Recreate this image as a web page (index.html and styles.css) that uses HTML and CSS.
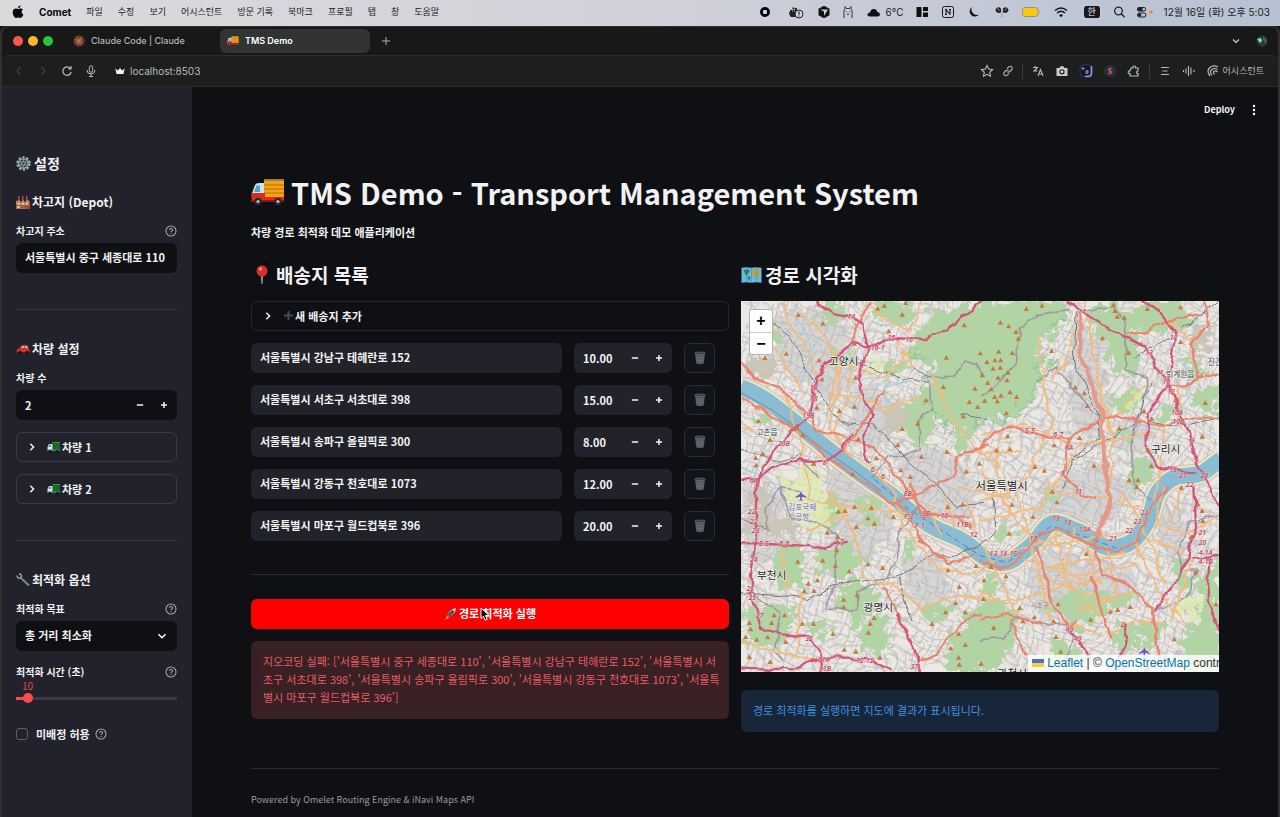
FILE: index.html
```html
<!DOCTYPE html>
<html lang="ko">
<head>
<meta charset="utf-8">
<title>TMS Demo</title>
<link rel="stylesheet" href="styles.css">
</head>
<body>
<svg class="sprite" aria-hidden="true">
  <symbol id="help" viewBox="0 0 12 12"><circle cx="6" cy="6" r="5" fill="none" stroke="currentColor" stroke-width="1.1"/><path d="M4.4 4.8C4.4 3 7.6 3 7.6 4.8 7.6 5.9 6 5.9 6 7.1M6 8.1v1" fill="none" stroke="currentColor" stroke-width="1.1"/></symbol>
  <symbol id="chev" viewBox="0 0 10 10"><path d="M3.3 1.8L6.6 5 3.3 8.2" fill="none" stroke="currentColor" stroke-width="1.5"/></symbol>
  <symbol id="minus" viewBox="0 0 10 10"><path d="M1.8 5h6.4" stroke="currentColor" stroke-width="1.5"/></symbol>
  <symbol id="plus" viewBox="0 0 10 10"><path d="M2 5h6M5 2v6" stroke="currentColor" stroke-width="1.5"/></symbol>
  <symbol id="trash" viewBox="0 0 14 14"><path d="M2 2h10L10.8 12.5Q7 14 3.200 12.500Z" fill="#54565c"/><ellipse cx="7" cy="2.300" rx="5.300" ry="1.300" fill="#3a3c42" stroke="#74767c" stroke-width=".6"/><path d="M4.500 4.500l.6 7.500M7 4.500V12.500M9.500 4.500L8.900 12M3 7h8M3.300 9.500h7.500" stroke="#7c7e84" stroke-width=".4"/></symbol>
  <symbol id="truck" viewBox="0 0 34 28"><path d="M13 1h20v20H13z" fill="#f5a313"/><path d="M13 1h20v2H13z" fill="#a8794a"/><path d="M13 7h20M13 11h20M13 15h20" stroke="#b06f13" stroke-width="1.200"/><path d="M1 15L4 7Q5 5 8 5h5v17H1z" fill="#cfe3e6"/><path d="M3 14L5.500 7.500H9V14z" fill="#4fa3c4"/><path d="M0 15h14v4h19v5H1z" fill="#d92c20"/><path d="M0 22h33v2H0z" fill="#8e1712"/><circle cx="7" cy="23.500" r="3.700" fill="#26282c"/><circle cx="7" cy="23.500" r="1.600" fill="#b9bcc0"/><circle cx="27" cy="23.500" r="3.700" fill="#26282c"/><circle cx="27" cy="23.500" r="1.600" fill="#b9bcc0"/></symbol>
  <symbol id="van" viewBox="0 0 14 12"><path d="M5.500 1H13v8.500H5.500z" fill="#136b1c"/><path d="M5.500 1H13v1H5.500z" fill="#5e7762"/><path d="M.5 6L2 3h3.500v6.500H.5z" fill="#dce6e8"/><path d="M1.300 6L2.500 3.700H4V6z" fill="#4b94ae"/><path d="M.5 8.500H13v1.300H.5z" fill="#6b7672"/><circle cx="3" cy="10.200" r="1.300" fill="#111"/><circle cx="10.500" cy="10.200" r="1.300" fill="#111"/></symbol>
</svg>

<header class="menubar">
  <nav class="menus">
    <svg width="12" height="14" viewBox="0 0 12 14"><path d="M8.500 .5C8.600 2 7.300 3.300 6 3.300 5.800 2 7.100.7 8.500.5zM6.200 4C7 4 7.700 3.400 8.800 3.400 9.700 3.400 10.500 3.900 11 4.600 9 5.800 9.400 8.700 11.400 9.500 10.800 11.200 9.700 12.900 8.600 12.900 7.800 12.900 7.300 12.400 6.300 12.400 5.300 12.400 4.800 12.900 4 12.900 2.300 12.900.7 9.800.7 7.300.7 4.900 2.200 3.500 3.900 3.500 4.900 3.500 5.600 4 6.200 4z" fill="#08080a"/></svg>
    <strong>Comet</strong><span>파일</span><span>수정</span><span>보기</span><span>어시스턴트</span><span>방문 기록</span><span>북마크</span><span>프로필</span><span>탭</span><span>창</span><span>도움말</span>
  </nav>
  <div class="status">
    <svg width="22" height="14" viewBox="0 0 22 14"><circle cx="11" cy="7" r="5" fill="#08080a"/><rect x="9" y="5" width="4" height="4" rx="1" fill="#d0d2dc"/></svg>
    <svg width="20" height="14" viewBox="0 0 20 14"><path d="M3 7h9v5H5Q3 10 3 7zM4 5h2v2H4zM6.500 5h2v2h-2zM9 3h2v4H9zM6.500 2.500h2v2h-2z" fill="#222"/><circle cx="13" cy="9" r="4" fill="#d0d2dc" stroke="#222"/><path d="M13 6.500v3M13 10.500v1" stroke="#222" stroke-width="1.200"/></svg>
    <svg width="16" height="14" viewBox="0 0 16 14"><path d="M8 .8l5.500 3v6.500L8 13.300l-5.500-3V3.800z" fill="#111"/><path d="M4 4.500h8L8 11V6.500z" fill="#c9ccd6"/></svg>
    <svg width="12" height="14" viewBox="0 0 12 14"><path d="M2 13V9Q1 6 3 4L3 1.500 4.500 3.500h3L9 1.500V4q2 2 1 5v4M4 6.500l1 1M8 6.500l-1 1M5 10q1-2 2 0" fill="none" stroke="#333" stroke-width="1"/></svg>
    <span class="weather"><svg width="17" height="12" viewBox="0 0 17 12"><path d="M6 10.500Q3 10 3.500 8 4 6.500 6 6.500 7 2.500 10 3 13 3.300 13.300 6 16 6.200 16 8.300 15.700 10.500 14 10.500z" fill="#111"/></svg>6°C</span>
    <svg width="16" height="14" viewBox="0 0 16 14"><path d="M2.500 2h5v10h-5zM9 2h5v4H9zM9 7.500h5V12H9z" fill="#111"/></svg>
    <svg width="16" height="14" viewBox="0 0 16 14"><rect x="2.500" y="1.500" width="11" height="11" rx="2" fill="none" stroke="#1a1a1a"/><path d="M5 4.500h2M6 4.500v5M5 9.500h2M6 4.500l4 5M10 9.500v-5M9 4.500h2" fill="none" stroke="#1a1a1a" stroke-width="1.100"/></svg>
    <svg width="16" height="14" viewBox="0 0 16 14"><path d="M6 2A5.200 5.200 0 1 0 13 9.500 5.500 5.500 0 0 1 6 2z" fill="#111"/></svg>
    <svg width="20" height="14" viewBox="0 0 20 14"><path d="M9 12V7.500Q4.500 9 3.500 5.500 4 2 7 2.200 9.500 3 9.200 5V12zM11 12V7.500q4.500 1.500 5.500-2Q16 2 13 2.200 10.500 3 10.800 5V12z" fill="#222"/><path d="M5.500 3.500l1.800 2M14.500 3.500l-1.800 2M10 3v8" stroke="#c4cad8" stroke-width=".9"/></svg>
    <svg width="18" height="14" viewBox="0 0 18 14"><rect x=".5" y="2.500" width="15.500" height="9" rx="2.500" fill="#fcc70c" stroke="#92949c"/><path d="M17 5.500q1.500 1.500 0 3z" fill="#92949c"/></svg>
    <svg width="22" height="14" viewBox="0 0 22 14"><path d="M5 5.500q6-5 12 0M7 8q4-3.500 8 0" fill="none" stroke="#111" stroke-width="1.500"/><path d="M9 10q2-1.500 4 0l-2 2.200z" fill="#111"/></svg>
    <span class="ime">한</span>
    <svg width="14" height="14" viewBox="0 0 14 14"><circle cx="6.500" cy="6" r="3.800" fill="none" stroke="#222" stroke-width="1.300"/><path d="M9.300 8.800l3.200 3.400" stroke="#222" stroke-width="1.500"/></svg>
    <svg width="18" height="14" viewBox="0 0 18 14"><rect x="1" y="2" width="9" height="4.500" rx="2.200" fill="#222"/><circle cx="7.800" cy="4.200" r="1.300" fill="#cfd2dc"/><rect x="1.500" y="8" width="8.500" height="4" rx="2" fill="none" stroke="#222"/><circle cx="3.500" cy="10" r="1.800" fill="#222"/><circle cx="15" cy="7" r="1.800" fill="#ff8a12"/></svg>
    <time>12월 16일 (화) 오후 5:03</time>
  </div>
</header>

<div class="window">
<div class="tabs">
  <div class="lights"><i class="red"></i><i class="yellow"></i><i class="green"></i></div>
  <a class="tab" href="#claude"><svg width="12" height="12" viewBox="0 0 13 13"><path d="M6.500.5v12M.5 6.500h12M2 2.300l9 8.400M2.300 11l8.400-9M4 .9l5 11.200M1 4.200l11 4.800M1 9l11-5M4.200 12L8.900 1" stroke="#c9694c" stroke-width="1"/></svg>Claude Code | Claude</a>
  <a class="tab active" href="#tms"><svg width="12" height="10"><use href="#truck"/></svg>TMS Demo</a>
  <button class="icon" aria-label="새 탭"><svg width="10" height="10" viewBox="0 0 10 10"><path d="M1 5h8M5 1v8" stroke="#b0b2b0"/></svg></button>
  <div class="tabs-end"><button class="icon" aria-label="탭 검색"><svg width="10" height="10" viewBox="0 0 10 10"><path d="M2 3.500l3 3 3-3" fill="none" stroke="#d0d0d0" stroke-width="1.200"/></svg></button><svg width="12" height="12" viewBox="0 0 12 12"><circle cx="6" cy="6" r="5.500" fill="#203c33"/><path d="M1 4l4-1 1 3-2 2z" fill="#9ad0bd"/><path d="M7 1l4 4-1 4-3-4z" fill="#4c5b4d"/></svg></div>
</div>
<div class="toolbar">
  <div class="nav">
    <button class="icon dim" aria-label="뒤로"><svg width="16" height="12" viewBox="0 0 16 12"><path d="M9.500 2L6 6l3.500 4" fill="none" stroke="currentColor"/></svg></button>
    <button class="icon dim" aria-label="앞으로"><svg width="16" height="12" viewBox="0 0 16 12"><path d="M6.500 2L10 6 6.500 10" fill="none" stroke="currentColor"/></svg></button>
    <button class="icon" aria-label="새로고침"><svg width="16" height="12" viewBox="0 0 16 12"><path d="M11.300 3.400A4.200 4.200 0 1 0 12.200 7M12 1v3H9" fill="none" stroke="currentColor" stroke-width="1.200"/></svg></button>
    <button class="icon" aria-label="음성"><svg width="16" height="12" viewBox="0 0 16 12"><rect x="6.300" y=".8" width="3.400" height="6.500" rx="1.700" fill="none" stroke="currentColor"/><path d="M4 5q0 4 4 4t4-4M8 9v2.500M6 11.500h4" fill="none" stroke="currentColor"/></svg></button>
  </div>
  <div class="address"><svg width="10" height="8" viewBox="0 0 10 8"><path d="M.3 1.500l2.500 2L5 1l2.200 2.500 2.500-2L8.500 7h-7z" fill="#f2f2f5"/></svg>localhost:8503</div>
  <div class="tools first">
    <svg class="i16" viewBox="0 0 16 16"><path d="M8 2.500l1.700 3.600 3.900.5-2.900 2.700.8 3.900L8 11.300l-3.500 1.900.8-3.900L2.400 6.600l3.900-.5z" fill="none" stroke="currentColor" stroke-width="1.100"/></svg>
    <svg class="i16" viewBox="0 0 16 16"><path d="M7 5.700l1.700-1.800q1.600-1.200 2.900 0t.2 2.800L10 8.500q-1.300 1-2.700.2M9 10.300l-1.700 1.800q-1.600 1.200-2.900 0t-.2-2.800L6 7.500q1.300-1 2.700-.2" fill="none" stroke="currentColor" stroke-width="1.100"/></svg>
  </div>
  <div class="tools">
    <svg class="i16" viewBox="0 0 16 16"><path d="M3 4.500h4.500L4 8h3.500M5.200 3v1.500M8 13l2.500-6.500L13 13M9 11h3" fill="none" stroke="currentColor" stroke-width="1.100"/></svg>
    <svg class="i16" viewBox="0 0 16 16"><path d="M2.500 5h3l1-1.800h3l1 1.800h3v8h-11z" fill="#c9cbc9"/><circle cx="8" cy="8.800" r="2.600" fill="#222"/><circle cx="8" cy="8.800" r="1.300" fill="#eee"/></svg>
    <svg class="i16" viewBox="0 0 16 16"><rect x="2" y="2" width="11" height="11" rx="3" fill="#15152a" stroke="#36375a"/><path d="M13.500 3v7q0 3.500-3.500 3.500H7" fill="none" stroke="#9695ee" stroke-width="1.600"/><path d="M5 4v3M3.500 5.500h3" stroke="#8a91ff"/><path d="M7.500 7h3v4h-3z" fill="#777"/></svg>
    <svg class="i16" viewBox="0 0 16 16"><circle cx="8" cy="8" r="6" fill="#28303f"/><path d="M9.600 6.200Q8.800 5.400 7.600 5.700 6.300 6.300 7 7.400L9 8.500Q9.800 9.600 8.600 10.300 7.300 10.600 6.400 9.700" fill="none" stroke="#d5504c" stroke-width="1.500"/></svg>
    <svg class="i16" viewBox="0 0 16 16"><path d="M5 5h2q-.5-2 1.200-2T9.500 5H12v3q-1.500 0-1.500 1.300T12 10.500V13H4v-2.500q-1.800.3-1.800-1.300T4 8z" fill="none" stroke="currentColor" stroke-width="1.200"/></svg>
  </div>
  <div class="tools last">
    <svg class="i16" viewBox="0 0 16 16"><path d="M4 4.500h8M5.500 8h5M4 11.500h8" stroke="currentColor" stroke-width="1.200"/></svg>
    <svg class="i16" viewBox="0 0 16 16"><path d="M2.500 7v2M5 5.500v5M7.500 3v10M10 4.500v7M13 7v2" stroke="currentColor" stroke-width="1.100"/></svg>
    <button class="assistant"><svg class="i16" viewBox="0 0 16 16"><path d="M5 13Q1 8 5 4.500 8.500 1.500 13 4M7 12.500Q4 8.500 7 6.500 9.500 4.500 12.500 6.500M9.500 11.500Q7.500 8.500 9.500 8 11 7.500 12.500 9" fill="none" stroke="currentColor" stroke-width="1.200"/></svg>어시스턴트</button>
  </div>
</div>

<div class="app">
<aside class="sidebar">
  <h2 class="side-title"><svg width="15" height="15" viewBox="0 0 15 15"><circle cx="7.500" cy="7.500" r="6" fill="none" stroke="#9fb0b6" stroke-width="2.400" stroke-dasharray="2.300 1.470"/><circle cx="7.500" cy="7.500" r="4.700" fill="#3c474d" stroke="#9cabb0" stroke-width="1.300"/><path d="M7.500 3v9M3.500 5.200l8 4.600M3.500 9.800l8-4.600" stroke="#91a0a6" stroke-width=".8"/><circle cx="7.500" cy="7.500" r="1.700" fill="#1e252a" stroke="#b7c2c7"/></svg>설정</h2>
  <h3><svg width="14" height="14" viewBox="0 0 14 14"><path d="M2 1h1.500v6H2zM6 1h1.500v6H6zM10 1h1.500v6H10z" fill="#b3474a"/><path d="M0 6l4-1v2l4-2v2l4-2 1.500 1v8H0z" fill="#b78a65"/><path d="M0 10h14v3.500H0z" fill="#8f6349"/><path d="M2 8h2v1.500H2zM6 8h2v1.500H6zM10 8h2v1.500h-2z" fill="#ecd390"/><path d="M9.500 11h4v3h-4z" fill="#c8372d"/><path d="M1 11h3v2H1z" fill="#d6bd8e"/></svg>차고지 (Depot)</h3>
  <div class="label"><label for="depot">차고지 주소</label><svg class="help"><use href="#help"/></svg></div>
  <input class="field" id="depot" type="text" value="서울특별시 중구 세종대로 110">
  <hr>
  <h3><svg width="14" height="14" viewBox="0 0 14 14"><path d="M.5 8.500Q1.500 6.500 3.500 6L5.500 3.200Q9 2.200 11.500 3.500L13 6.500l.7 4H.8z" fill="#dc2f27"/><path d="M4.800 6l1.400-2H8v2zM8.800 4h2.200L12.200 6H8.800z" fill="#8fc0d3"/><path d="M.8 10h13v1H.8z" fill="#7d1612"/><circle cx="4" cy="10.500" r="1.700" fill="#15161a"/><circle cx="11" cy="10.500" r="1.700" fill="#15161a"/></svg>차량 설정</h3>
  <div class="label"><label for="count">차량 수</label></div>
  <div class="stepper dark"><input id="count" type="text" inputmode="numeric" value="2"><button aria-label="줄이기"><svg><use href="#minus"/></svg></button><button aria-label="늘리기"><svg><use href="#plus"/></svg></button></div>
  <details><summary><svg class="chev"><use href="#chev"/></svg><svg width="14" height="12"><use href="#van"/></svg>차량 1</summary></details>
  <details><summary><svg class="chev"><use href="#chev"/></svg><svg width="14" height="12"><use href="#van"/></svg>차량 2</summary></details>
  <hr>
  <h3><svg width="14" height="14" viewBox="0 0 14 14"><path d="M5 5l7.500 7" stroke="#7f868a" stroke-width="2" stroke-linecap="round"/><path d="M1 2.500Q1 5.500 4 5L5.500 3.500Q5.500 1 3 .8" fill="none" stroke="#999fa3" stroke-width="1.400"/></svg>최적화 옵션</h3>
  <div class="label"><label for="goal">최적화 목표</label><svg class="help"><use href="#help"/></svg></div>
  <div class="select"><select id="goal"><option>총 거리 최소화</option></select><svg width="10" height="10" viewBox="0 0 10 10"><path d="M1.500 3.300L5 6.700l3.500-3.400" fill="none" stroke="#fafafa" stroke-width="1.600"/></svg></div>
  <div class="label range-label"><label for="seconds">최적화 시간 (초)</label><svg class="help"><use href="#help"/></svg></div>
  <output for="seconds">10</output>
  <input class="range" id="seconds" type="range" min="5" max="120" value="10">
  <div class="check"><input id="unassigned" type="checkbox"><label for="unassigned">미배정 허용</label><svg class="help"><use href="#help"/></svg></div>
</aside>

<main>
<div class="apphead"><button>Deploy</button><button aria-label="메뉴"><svg width="4" height="12" viewBox="0 0 4 12"><circle cx="2" cy="2" r="1.200" fill="#fff"/><circle cx="2" cy="6" r="1.200" fill="#fff"/><circle cx="2" cy="10" r="1.200" fill="#fff"/></svg></button></div>
<div class="content">
  <h1><svg width="34" height="28"><use href="#truck"/></svg>TMS Demo - Transport Management System</h1>
  <p class="lead">차량 경로 최적화 데모 애플리케이션</p>
  <div class="columns">
    <section>
      <h2><svg width="22" height="22" viewBox="0 0 22 22"><path d="M10 11h2l-.5 9h-1z" fill="#a9adb0"/><circle cx="11" cy="7" r="5.500" fill="#dc2f2a"/><circle cx="9.500" cy="5" r="1.700" fill="#f48f86"/></svg>배송지 목록</h2>
      <details class="add"><summary><svg class="chev"><use href="#chev"/></svg><svg width="11" height="11" viewBox="0 0 11 11"><path d="M1 5.500h9M5.500 1v9" stroke="#484a4c" stroke-width="2"/></svg>새 배송지 추가</summary></details>
      <div class="stops">
        <div class="stop"><input class="field" type="text" aria-label="주소 1" value="서울특별시 강남구 테헤란로 152"><div class="stepper"><input type="text" aria-label="수량 1" value="10.00"><button aria-label="줄이기"><svg><use href="#minus"/></svg></button><button aria-label="늘리기"><svg><use href="#plus"/></svg></button></div><button class="remove" aria-label="삭제"><svg><use href="#trash"/></svg></button></div>
        <div class="stop"><input class="field" type="text" aria-label="주소 2" value="서울특별시 서초구 서초대로 398"><div class="stepper"><input type="text" aria-label="수량 2" value="15.00"><button aria-label="줄이기"><svg><use href="#minus"/></svg></button><button aria-label="늘리기"><svg><use href="#plus"/></svg></button></div><button class="remove" aria-label="삭제"><svg><use href="#trash"/></svg></button></div>
        <div class="stop"><input class="field" type="text" aria-label="주소 3" value="서울특별시 송파구 올림픽로 300"><div class="stepper"><input type="text" aria-label="수량 3" value="8.00"><button aria-label="줄이기"><svg><use href="#minus"/></svg></button><button aria-label="늘리기"><svg><use href="#plus"/></svg></button></div><button class="remove" aria-label="삭제"><svg><use href="#trash"/></svg></button></div>
        <div class="stop"><input class="field" type="text" aria-label="주소 4" value="서울특별시 강동구 천호대로 1073"><div class="stepper"><input type="text" aria-label="수량 4" value="12.00"><button aria-label="줄이기"><svg><use href="#minus"/></svg></button><button aria-label="늘리기"><svg><use href="#plus"/></svg></button></div><button class="remove" aria-label="삭제"><svg><use href="#trash"/></svg></button></div>
        <div class="stop"><input class="field" type="text" aria-label="주소 5" value="서울특별시 마포구 월드컵북로 396"><div class="stepper"><input type="text" aria-label="수량 5" value="20.00"><button aria-label="줄이기"><svg><use href="#minus"/></svg></button><button aria-label="늘리기"><svg><use href="#plus"/></svg></button></div><button class="remove" aria-label="삭제"><svg><use href="#trash"/></svg></button></div>
      </div>
      <hr>
      <button class="run"><svg width="13" height="13" viewBox="0 0 13 13"><path d="M3 8Q6 2 12 1 11.500 6.500 5.500 10z" fill="#d3dadf"/><path d="M3 8l2.500 2Q9 8 10 5.500L7.500 3.500Q4.500 5 3 8z" fill="#4f5e6b"/><circle cx="8.600" cy="4.500" r="1.200" fill="#223e68"/><path d="M4 6L1 8.500h2.500zM7 9l-2.500 3V9.500z" fill="#a5313a"/><path d="M3 9l2 1.500L1 13z" fill="#ffc62e"/></svg>경로 최적화 실행<svg class="cursor" width="10" height="14" viewBox="0 0 10 14"><path d="M1 1v10.500l2.500-2.200 1.800 3.900 2-.9-1.800-3.800H9z" fill="#050505" stroke="#fff"/></svg></button>
      <p class="error" role="alert">지오코딩 실패: ['서울특별시 중구 세종대로 110', '서울특별시 강남구 테헤란로 152', '서울특별시 서초구 서초대로 398', '서울특별시 송파구 올림픽로 300', '서울특별시 강동구 천호대로 1073', '서울특별시 마포구 월드컵북로 396']</p>
    </section>
    <section>
      <h2><svg width="21" height="18" viewBox="0 0 22 18"><path d="M.5 1.500l5-.5 5.500.5 5-.5 5.500.5V17l-5.500-.5-5 .5-5.500-.5-5 .5z" fill="#68b8e8"/><path d="M2.500 4l5-1 2 2-2 2-1 3-2-2zM8 10l2 1-1.500 4.500L7 12z" fill="#3d7d35"/><path d="M11 6l2-3 6 0 1 4-3 2-1 4-2-1-1-3-2-1zM17 12l2 0 0 2-2 0z" fill="#b8a43b"/><path d="M5.500 1v15.500M11 1.500V17M16.500 1v15.500" stroke="#347eaf" stroke-width=".5"/></svg>경로 시각화</h2>
      <div class="map">
        <svg class="mapart" viewBox="0 0 1434 1113" preserveAspectRatio="xMidYMid slice" role="img" aria-label="서울 지도">
          <defs>
            <filter id="rough" x="-5%" y="-5%" width="110%" height="110%"><feTurbulence type="fractalNoise" baseFrequency=".028" numOctaves="4" seed="4"/><feDisplacementMap in="SourceGraphic" scale="90" xChannelSelector="R" yChannelSelector="G"/></filter>
            <filter id="bend" x="-5%" y="-5%" width="110%" height="110%"><feTurbulence type="fractalNoise" baseFrequency=".008" numOctaves="2" seed="9"/><feDisplacementMap in="SourceGraphic" scale="90" xChannelSelector="R" yChannelSelector="G"/></filter>
            <filter id="wander" x="-5%" y="-5%" width="110%" height="110%"><feTurbulence type="fractalNoise" baseFrequency=".022" numOctaves="2" seed="5"/><feDisplacementMap in="SourceGraphic" scale="24" xChannelSelector="R" yChannelSelector="G"/></filter>
            <pattern id="streets" width="92" height="84" patternUnits="userSpaceOnUse" patternTransform="rotate(24)"><path d="M0 10H92M0 38H50M20 60H92M14 0V84M44 10V60M70 0V50M32 60V84M84 38V84M55 24H92M44 48H70" fill="none" stroke="#bab8ba" stroke-width="3"/></pattern>
            <pattern id="lanes" width="57" height="61" patternUnits="userSpaceOnUse" patternTransform="rotate(-12)"><path d="M0 8H40M12 8V61M12 34H57M38 34V61M50 0V34M0 52H12" fill="none" stroke="#c9c7c7" stroke-width="2"/></pattern>
          </defs>
          <rect width="1434" height="1113" fill="#ece8e3"/>
          <g filter="url(#rough)" fill="#d7d6d5">
            <path d="M100 30L300 20 350 200 290 330 190 250 90 160zM330 250L430 240 450 390 390 460 320 390zM10 530L120 580 150 760 40 800 0 700zM260 480L420 560 460 700 350 800 250 680zM450 430L620 450 720 560 660 680 500 600zM480 760L600 760 620 900 540 920 470 850zM990 60L1080 120 1110 330 1050 440 980 340zM880 560L1080 470 1180 560 1120 680 880 650zM900 760L1100 780 1200 830 1150 900 920 930 850 850zM1240 640L1330 600 1350 760 1270 780zM940 960L880 930 900 780 960 800zM1150 350L1240 370 1210 440 1110 440zM500 300L600 270 570 350 500 360z"/>
          </g>
          <g filter="url(#bend)"><rect width="1434" height="1113" fill="url(#lanes)"/><rect width="1434" height="1113" fill="url(#streets)"/></g>
          <g filter="url(#rough)" fill="#b2d4a5">
            <path d="M400 0H505L525 60 470 80 410 60 390 30zM560 60L610 15 700 5 800 0 900 0 985 20 950 90 920 120 900 90 890 150 940 175 900 220 870 300 810 350 720 350 690 400 670 470 640 390 590 350 560 440 510 420 470 350 500 300 560 270 580 200 510 160 500 110zM225 20L290 0 315 50 260 80zM60 70L100 65 125 140 85 130zM250 150L295 140 320 180 270 205zM440 185L490 180 470 230 435 220zM30 340L100 335 85 370 40 370z"/>
            <path d="M1050 30L1120 10 1180 30 1230 0 1330 0 1370 60 1330 100 1300 80 1240 95 1180 80 1190 220 1160 240 1120 180 1070 120zM1175 270L1220 265 1200 320 1120 330 1085 290zM1250 330L1310 290 1335 325 1290 355 1245 370zM1180 480L1225 460 1235 540 1185 580 1160 540zM1370 260L1434 260V340L1385 360 1350 300zM1310 160L1390 200 1405 230 1335 220zM1125 380L1180 395 1165 420 1120 415z"/>
            <path d="M120 740L180 730 190 860 130 870 90 800zM255 570L300 590 290 670 250 670zM340 600L420 580 425 660 380 670zM225 740L310 730 380 770 290 840 220 800zM310 850L380 840 410 910 350 970 290 910zM20 920L80 900 150 920 165 990 90 1045 20 1020zM210 960L260 950 255 1000 210 1010zM390 950L440 940 450 1050 370 1060 340 1010zM540 930L610 895 635 945 560 970zM610 1060L660 970 740 890 820 910 840 960 810 1050 740 1113 630 1113zM890 920L960 890 1000 860 1100 880 1180 870 1160 920 1060 930 1010 990 960 940zM940 1010L1000 1035 1030 1113 940 1113zM1120 960L1190 975 1180 1060 1120 1050zM1300 780L1340 770 1360 850 1330 880 1300 830zM1380 810L1434 770V1113H1340L1320 1040 1380 940zM730 810L780 835 760 875 725 880zM750 690L795 655 820 700 785 720zM490 730L508 725 520 775 485 790zM900 570L945 560 955 600 905 610zM1200 950L1270 970 1240 1060 1200 1040z"/>
          </g>
          <path d="M560 300Q600 350 630 400L660 440M975 30Q930 100 900 95 890 150 940 180 860 200 870 300L800 350 690 365M500 120Q580 200 555 280" filter="url(#rough)" fill="none" stroke="#8cc48e" stroke-width="7" opacity=".7"/>
          <g filter="url(#rough)" fill="#deecae"><path d="M170 480L235 500 250 600 180 560zM115 540L200 540 270 620 260 700 180 670 120 590zM360 190L420 160 430 210 370 225zM1300 900L1390 880 1370 960 1310 950zM1170 290L1215 270 1190 330zM300 440L370 490 340 520z" opacity=".75"/></g>
          <g filter="url(#rough)" fill="#c9c6b5"><path d="M10 180L80 160 120 210 50 235 0 220zM45 550L90 540 80 690 20 700zM90 640L180 660 150 710 80 690zM1350 90L1410 70 1400 150 1350 190zM440 300L470 280 490 370 440 410z"/></g>
          <path d="M170 60Q240 130 180 240M390 60Q440 90 480 50M500 240L430 260 440 340M110 370L60 460 30 560M0 500L80 530 140 600M1310 330L1350 280 1330 180M1180 560L1250 450 1310 380M900 590L1000 620" fill="none" stroke="#a6cedf" stroke-width="4"/>
          <path d="M0 259C70 285 100 315 162 364S250 440 332 499 400 550 432 569 470 600 500 625 570 680 622 699 690 738 717 760 790 800 827 769 875 735 907 689 965 675 1007 689 1080 750 1127 739 1185 720 1217 664 1225 600 1267 554 1340 535 1387 514L1440 475" fill="none" stroke="#f2b69b" stroke-width="66"/>
          <path d="M0 259C70 285 100 315 162 364S250 440 332 499 400 550 432 569 470 600 500 625 570 680 622 699 690 738 717 760 790 800 827 769 875 735 907 689 965 675 1007 689 1080 750 1127 739 1185 720 1217 664 1225 600 1267 554 1340 535 1387 514L1440 475" fill="none" stroke="#deedce" stroke-width="60"/>
          <path d="M0 259C70 285 100 315 162 364S250 440 332 499 400 550 432 569 470 600 500 625 570 680 622 699 690 738 717 760 790 800 827 769 875 735 907 689 965 675 1007 689 1080 750 1127 739 1185 720 1217 664 1225 600 1267 554 1340 535 1387 514L1440 475" fill="none" stroke="#8cbcd1" stroke-width="48"/>
          <path d="M0 275L90 325 160 375 240 440 340 510 420 570" fill="none" stroke="#7787a8" stroke-width="3"/>
          <path d="M400 535L500 622 620 700 720 765 800 785 860 735 930 675 1040 710 1127 742" fill="none" stroke="#557fc9" stroke-width="3" stroke-dasharray="18 12"/>
          <g filter="url(#wander)">
          <g fill="none" stroke="#978b9b" stroke-width="5" opacity=".8" stroke-linejoin="round">
            <path d="M520 200L570 230 640 225 670 180 710 190 725 230M565 230L570 330 530 360 535 450 440 470 400 530M0 440L50 460 120 480 180 460 230 530M0 650L80 690 75 620 120 560 180 570M120 560L150 650 220 660 290 700 280 850 250 920 350 930 350 870 430 840 470 780 470 700 530 620M720 290L790 230 830 180 835 80 900 40 980 20M1030 30L1120 20 1150 60 1155 210 1220 230 1210 280 1170 430 1180 550 1230 600M890 240L950 200 1020 300 1080 350M717 1020L790 1010 820 950 920 970 1000 970 970 1090M1350 660L1310 750 1330 810 1370 810 1330 890 1240 930M1434 640L1350 660M30 870L120 940 100 1050 130 1080"/>
          </g>
          <g fill="none" stroke="#777778" stroke-width="3">
            <path d="M80 60L150 110 240 290 300 365 390 370 480 450 530 510 600 560 640 620 730 610M0 875L130 885 200 895 270 855 400 835 460 830 580 760 620 770 720 730M470 830L510 960M1005 30L1000 190 1070 330 1075 410 1000 470 960 560M1434 0L1300 100 1180 170M1220 360L1300 380 1434 350M1230 240L1180 370 1075 430 1000 480M717 730L760 690 760 560M300 170L480 230 560 250M660 340L740 350"/>
          </g>
          <g fill="none" stroke="#f2bc80" stroke-width="6" stroke-linejoin="round" stroke-linecap="round">
            <path d="M130 0L140 70 190 120 230 230M80 120L140 200 190 280M180 40L260 110 290 220 260 330M290 150L300 250 260 380 330 470M310 190L430 230 470 190 490 140M390 0L430 60 510 90 540 0M470 120L520 200M260 280L400 300 430 330 540 280M330 190L320 300 270 400M580 230L610 310 640 360 700 440 780 500M0 360L30 390M130 280L170 390 190 480 210 570 200 600M200 600L400 620 500 640M255 560L340 700 370 830 470 860 540 920 650 880 760 900M120 720L140 870M180 880L170 1050M0 1030L150 1060 240 1085M250 600L320 620M320 640L200 690M400 500L460 580 490 680 590 800 700 820 760 780"/>
            <path d="M892 120L915 290 940 370 900 420 860 530 720 560M1000 90L970 190 930 240M1030 0L1070 230 1110 400 1110 550M1210 250L1130 340 1080 350M720 400L850 370 990 430M720 460L840 450M720 510L780 590 850 690 950 740M1000 460L930 570 1090 590 1190 620M780 400L760 500 810 590M1270 380L1260 490 1240 600M1230 400L1100 420 1000 440M1240 0L1260 40 1350 120M1310 250L1320 390M1180 720L1260 880 1340 970M1140 570L1200 660 1270 840"/>
            <path d="M717 870L790 900 900 880 980 850 1080 840M730 740L790 860 830 950M830 580L870 720 930 960M720 660L900 620 930 540M720 600L850 560M780 770L960 700M890 740L1100 700M930 800L1150 760M960 830L1180 790M850 780L1080 850M1000 680L970 830M1040 720L1060 860M1100 740L1130 880M940 680L980 860M900 830L1100 900M960 960L1080 1000M1010 930L1180 870M1090 950L1010 900M1240 720L1340 760M1250 670L1340 700 1434 640M1100 1000L1180 960 1260 970M1270 560L1240 680M1320 560L1280 700M1360 760L1290 960M680 600L700 680M560 620L600 700M610 590L640 680M660 560L800 590"/>
          </g>
          <g fill="none" stroke="#ea856d" stroke-width="7" stroke-linejoin="round" stroke-linecap="round">
            <path d="M0 185L40 230 110 260 190 330 230 385 300 405 400 440 470 530 560 640 640 650 690 680M0 290L90 345 180 390 260 470 350 530 420 580 500 630 540 720 620 790 700 760M390 0L360 50 330 120M427 270L380 340 310 450M460 610L550 570 640 520 650 465 740 430M510 550L540 640 610 650 680 650M717 440L760 390 820 380 920 410 990 410M1015 30L1020 170 1080 320 1085 480 1110 600 1060 720 1080 820 1160 850 1230 920 1260 1090M982 410L1070 360 1130 340 1210 370 1280 375 1320 350 1434 350M1160 100L1220 90 1280 60 1370 40M1390 0L1400 70 1350 130 1370 230 1434 220M1280 250L1350 255 1380 220M985 410L970 520 1020 580 1060 590M717 780L780 805 830 780 900 700 950 680 1050 730 1130 755 1190 720 1230 620 1280 560M890 740L930 900 990 980 1010 960M430 860L480 950 530 1080M540 1080L590 1060 650 980 700 940 720 940M717 955L800 940 900 970M850 1060L810 960M1050 830L1110 1010"/>
            <path d="M1015 60L1020 170 1080 320 1090 490 1110 600 1070 700" stroke="#e49a88" stroke-width="13"/>
          </g>
          <g fill="none" stroke="#d4557a" stroke-width="7" stroke-linejoin="round" stroke-linecap="round">
            <path d="M222 -5L280 37 332 47 367 74 380 134 367 169 357 229 362 279 394 339 382 379 367 404 372 459 380 484M380 137L332 129 292 159 257 189 227 229 217 289 207 344 162 389 112 434 62 499 47 549 45 610 45 710 30 820 30 880 60 980 120 1000 200 1005 245 1055 235 1113M380 137L412 129 442 109 542 117 622 84 722 4M0 536L42 539 92 499 172 474 262 479 302 449 332 399M0 727L60 727 220 740 320 722M0 1100L150 1105 245 1070 370 1070 450 1110M530 1113L530 1070 470 940"/>
            <path d="M980 0L1050 50 1140 105 1210 140 1250 200 1280 240 1310 320 1350 410 1370 500 1400 550 1434 610M1205 0L1260 40 1300 90 1290 190 1280 250 1220 340 1220 450 1250 500 1360 515M1360 555L1365 680 1330 800 1280 880 1240 930M1350 770L1434 765M1405 770L1400 900 1434 990M980 980L1050 1070M1150 970L1160 1030 1130 1070M1210 1113L1250 1080"/>
          </g>
          </g>
          <path fill="#c47b3d" d="M172 34l8 14h-16zM246 60l8 14h-16zM136 150l8 14h-16zM234 170l8 14h-16zM72 163l8 14h-16zM243 227l8 14h-16zM410 15l8 14h-16zM430 6l8 14h-16zM484 33l8 14h-16zM494-2l8 14h-16zM443 83l8 14h-16zM340 120l8 14h-16zM344 222l8 14h-16zM295 322l8 14h-16zM340 309l8 14h-16zM228 312l8 14h-16zM52 353l8 14h-16zM166 373l8 14h-16zM185 395l8 14h-16zM87 409l8 14h-16zM65 451l8 14h-16zM44 463l8 14h-16zM45 485l8 14h-16zM218 480l8 14h-16zM335 512l8 14h-16zM352 407l8 14h-16zM406 464l8 14h-16zM471 425l8 14h-16zM484 376l8 14h-16zM530 360l8 14h-16zM541 460l8 14h-16zM479 500l8 14h-16zM508 520l8 14h-16zM618 445l8 14h-16zM555 290l8 14h-16zM607 250l8 14h-16zM616 162l8 14h-16zM670 65l8 14h-16zM718 149l8 14h-16zM702 255l8 14h-16zM685 295l8 14h-16zM710 310l8 14h-16zM667 338l8 14h-16zM676 504l8 14h-16zM715 480l8 14h-16zM856 16l8 14h-16zM903 6l8 14h-16zM778 57l8 14h-16zM803 68l8 14h-16zM825 85l8 14h-16zM832 105l8 14h-16zM773 144l8 14h-16zM814 148l8 14h-16zM762 170l8 14h-16zM779 170l8 14h-16zM738 175l8 14h-16zM756 195l8 14h-16zM778 192l8 14h-16zM724 214l8 14h-16zM771 222l8 14h-16zM801 207l8 14h-16zM740 238l8 14h-16zM751 257l8 14h-16zM798 230l8 14h-16zM761 280l8 14h-16zM780 276l8 14h-16zM807 266l8 14h-16zM827 280l8 14h-16zM731 292l8 14h-16zM769 293l8 14h-16zM796 329l8 14h-16zM800 398l8 14h-16zM766 440l8 14h-16zM807 437l8 14h-16zM932 142l8 14h-16zM1003 252l8 14h-16zM1030 269l8 14h-16zM1039 307l8 14h-16zM940 425l8 14h-16zM1016 403l8 14h-16zM1059 486l8 14h-16zM882 490l8 14h-16zM910 501l8 14h-16zM1084 104l8 14h-16zM1118 3l8 14h-16zM1122 22l8 14h-16zM1150 42l8 14h-16zM1129 39l8 14h-16zM1219 16l8 14h-16zM1319 11l8 14h-16zM1319 115l8 14h-16zM1163 148l8 14h-16zM1209 323l8 14h-16zM1232 346l8 14h-16zM1135 375l8 14h-16zM1393 298l8 14h-16zM1384 399l8 14h-16zM1221 438l8 14h-16zM1231 487l8 14h-16zM1164 530l8 14h-16zM1191 530l8 14h-16zM1187 550l8 14h-16zM1321 552l8 14h-16zM934 564l8 14h-16zM948 596l8 14h-16zM813 603l8 14h-16zM341 610l8 14h-16zM391 613l8 14h-16zM312 622l8 14h-16zM292 624l8 14h-16zM381 644l8 14h-16zM400 660l8 14h-16zM346 670l8 14h-16zM457 640l8 14h-16zM259 687l8 14h-16zM291 700l8 14h-16zM287 740l8 14h-16zM170 774l8 14h-16zM245 771l8 14h-16zM283 786l8 14h-16zM325 803l8 14h-16zM381 782l8 14h-16zM425 793l8 14h-16zM229 830l8 14h-16zM202 840l8 14h-16zM190 862l8 14h-16zM219 862l8 14h-16zM308 888l8 14h-16zM348 875l8 14h-16zM308 911l8 14h-16zM399 943l8 14h-16zM388 961l8 14h-16zM382 987l8 14h-16zM99 935l8 14h-16zM131 935l8 14h-16zM92 958l8 14h-16zM25 958l8 14h-16zM29 977l8 14h-16zM14 1000l8 14h-16zM47 1008l8 14h-16zM80 1001l8 14h-16zM134 1015l8 14h-16zM184 960l8 14h-16zM217 961l8 14h-16zM276 991l8 14h-16zM310 1038l8 14h-16zM345 1044l8 14h-16zM417 1062l8 14h-16zM25 1060l8 14h-16zM87 1075l8 14h-16zM655 850l8 14h-16zM644 898l8 14h-16zM614 926l8 14h-16zM673 926l8 14h-16zM573 961l8 14h-16zM653 991l8 14h-16zM673 1024l8 14h-16zM629 1034l8 14h-16zM653 1062l8 14h-16zM655 1083l8 14h-16zM720 1080l8 14h-16zM621 800l8 14h-16zM705 787l8 14h-16zM620 610l8 14h-16zM665 603l8 14h-16zM805 690l8 14h-16zM876 640l8 14h-16zM750 790l8 14h-16zM795 818l8 14h-16zM729 830l8 14h-16zM727 886l8 14h-16zM836 913l8 14h-16zM951 902l8 14h-16zM880 941l8 14h-16zM845 953l8 14h-16zM938 953l8 14h-16zM758 973l8 14h-16zM945 1000l8 14h-16zM959 1044l8 14h-16zM1036 751l8 14h-16zM1049 948l8 14h-16zM1108 924l8 14h-16zM1130 919l8 14h-16zM1168 910l8 14h-16zM1300 1007l8 14h-16zM1371 602l8 14h-16zM1384 622l8 14h-16zM1386 652l8 14h-16zM1350 700l8 14h-16zM1364 806l8 14h-16zM1425 902l8 14h-16z"/>
          <g class="route">
            <text x="331" y="54">14</text><text x="451" y="118">16</text><text x="504" y="122">16</text><text x="410" y="148">16-1</text><text x="218" y="267">18</text><text x="218" y="300">18</text><text x="202" y="351">19B</text><text x="128" y="436">20B</text><text x="38" y="546">6A</text><text x="250" y="491">8</text><text x="395" y="513">6</text><text x="426" y="533">6</text><text x="500" y="586">8B</text><text x="556" y="646">9B</text><text x="610" y="652">10</text><text x="664" y="678">11B</text><text x="698" y="709">12</text><text x="504" y="655">F-2</text><text x="537" y="680">F-1</text><text x="32" y="639">22</text><text x="38" y="670">22</text><text x="44" y="696">23</text><text x="38" y="782">24</text><text x="69" y="735">5-5</text><text x="130" y="735">6-6</text><text x="303" y="730">7</text><text x="28" y="869">25</text><text x="34" y="896">25</text><text x="56" y="950">27</text><text x="204" y="1020">32</text><text x="248" y="1082">11A</text><text x="252" y="1109">11B</text><text x="371" y="1085">12-12</text><text x="520" y="1104">37</text><text x="1022" y="38">14</text><text x="867" y="397">5-5</text><text x="952" y="409">6-7</text><text x="984" y="447">8A</text><text x="964" y="524">9</text><text x="1012" y="578">11</text><text x="1224" y="162">13</text><text x="1256" y="222">11</text><text x="1276" y="250">10</text><text x="1290" y="279">12</text><text x="1298" y="118">12</text><text x="1308" y="342">10A</text><text x="1312" y="369">10B</text><text x="1355" y="425">9</text><text x="1296" y="513">18</text><text x="1326" y="532">21</text><text x="1346" y="558">22</text><text x="1390" y="532">24</text><text x="787" y="766">13-14-15</text><text x="877" y="721">16</text><text x="946" y="660">18</text><text x="980" y="672">18</text><text x="1032" y="693">19A</text><text x="1116" y="721">21</text><text x="1164" y="697">22</text><text x="1190" y="668">23</text><text x="1210" y="641">23</text><text x="1384" y="702">21</text><text x="1384" y="731">20</text><text x="1394" y="762">4-1A</text><text x="1394" y="790">4-1B</text><text x="986" y="992">49</text><text x="1010" y="1020">49</text><text x="1144" y="978">2</text>
          </g>
          <g class="air"><path d="M180 569l4 10 12 8v4l-13-4-1 8 5 4-7 0-7 0 5-4-1-8-13 4v-4l12-8zM1210 1037l4 10 12 8v4l-13-4-1 8 5 4-7 0-7 0 5-4-1-8-13 4v-4l12-8z"/><text x="184" y="627">김포국제</text><text x="184" y="656">공항</text></g>
          <g class="place"><text x="308" y="193">고양시</text><text x="92" y="835">부천시</text><text x="412" y="929">광명시</text><text x="1274" y="457">구리시</text><text class="city" x="782" y="568">서울특별시</text><text x="814" y="1129">과천시</text></g>
          <g class="town"><text x="78" y="402">고촌읍</text><text x="1318" y="228">퇴계원읍</text><text x="1432" y="192">진건읍</text></g>
          <text class="district" x="896" y="922">서초구</text>
        </svg>
        <div class="zoom"><button aria-label="확대">+</button><button aria-label="축소">−</button></div>
        <div class="credit"><svg width="12" height="8" viewBox="0 0 12 8"><path d="M0 0h12v4H0z" fill="#4872d4"/><path d="M0 4h12v4H0z" fill="#fad02d"/></svg> <a href="#leaflet">Leaflet</a> | © <a href="#osm">OpenStreetMap</a> contributors</div>
      </div>
      <p class="info">경로 최적화를 실행하면 지도에 결과가 표시됩니다.</p>
    </section>
  </div>
  <hr>
  <footer>Powered by Omelet Routing Engine &amp; iNavi Maps API</footer>
</div>
</main>
</div>
</div>
</body>
</html>
```
FILE: styles.css
```css
* { box-sizing: border-box; }
html, body { height: 100%; }
body {
  margin: 0;
  display: flex;
  flex-direction: column;
  overflow: hidden;
  background: #171817;
  color: #f2f2f3;
  font: 700 11px/18px "Noto Sans CJK KR", sans-serif;
}
svg { display: block; flex: none; }
button, input, select { font: inherit; color: inherit; border: 0; margin: 0; padding: 0; background: none; }
h1, h2, h3, p { margin: 0; }
a { color: inherit; text-decoration: none; }
hr { width: 100%; height: 1px; border: 0; background: #303138; }
.sprite { position: absolute; width: 0; height: 0; }
.icon { display: flex; }
.dim { color: #555755; }

.menubar {
  flex: none;
  height: 26px;
  padding: 0 10px 2px 12px;
  display: flex;
  align-items: center;
  justify-content: space-between;
  background: linear-gradient(90deg, #dadadd, #d3d2da 45%, #b6c1d3);
  color: #1c1c20;
  font: 400 10px/14px Inter, "Noto Sans CJK KR", sans-serif;
  white-space: nowrap;
}
.menus { display: flex; align-items: center; gap: 15px; font-size: 9px; }
.menus strong { font-size: 10px; color: #08080a; }
.status { display: flex; align-items: center; gap: 10px; }
.weather { display: flex; align-items: center; justify-content: space-between; width: 40px; }
.ime { width: 20px; border: solid transparent; border-width: 0 2px; border-radius: 4px; background: #18181b content-box; color: #eee; font-size: 9px; line-height: 12px; text-align: center; }

.window { flex: 1; min-height: 0; display: flex; flex-direction: column; border: solid #303130; border-width: 1px 2px 0 2px; border-radius: 8px 8px 0 0; }
.tabs { flex: none; height: 28px; display: flex; align-items: center; padding: 0 10px 0 11px; font: 500 9px/14px Inter, sans-serif; color: #b5b6b5; }
.lights { display: flex; gap: 5px; padding-right: 13px; }
.lights i { width: 10px; height: 10px; border-radius: 50%; }
.red { background: #ff5750; }
.yellow { background: #fdb62a; }
.green { background: #28c63c; }
.tab { display: flex; align-items: center; gap: 6px; width: 150px; height: 24px; padding: 0 7px; border-radius: 6px; }
.tab + .tab { margin-left: 4px; }
.tab.active { background: #323433; color: #fff; font-weight: 600; }
.tabs .tab + .tab + .icon { margin-left: 11px; }
.tabs-end { margin-left: auto; display: flex; gap: 15px; align-items: center; }

.toolbar { flex: none; height: 32px; display: flex; align-items: center; padding: 0 14px 0 9px; background: #1d1f1e; border: solid #2b2d2c; border-width: 1px 0; border-radius: 6px 6px 0 0; color: #b9bbb9; }
.nav { display: flex; gap: 8px; }
.address { display: flex; align-items: center; gap: 5px; margin: 0 auto 0 16px; font: 400 10px/14px Inter, sans-serif; }
.tools { display: flex; gap: 8px; align-items: center; padding: 0 7px; border-left: 1px solid #393b3a; }
.tools.first { gap: 5px; padding-right: 6px; border: 0; }
.tools.last { padding-right: 0; }
.i16 { width: 16px; height: 16px; }
.assistant { display: flex; align-items: center; gap: 2px; font-weight: 400; font-size: 9px; line-height: 14px; }

.app { flex: 1; min-height: 0; display: flex; background: #0f1014; }
.sidebar { flex: none; width: 190px; padding: 66px 15px 0 14px; background: #21222b; }
.sidebar hr { margin: 36px 0 29px; background: #363740; }
.side-title, .sidebar h3 { display: flex; align-items: center; gap: 2px; line-height: 20px; font-weight: 700; white-space: nowrap; }
.side-title { font-size: 14px; gap: 3px; margin-bottom: 19px; }
.sidebar h3 { font-size: 12px; margin-bottom: 12px; }
.label { display: flex; align-items: center; justify-content: space-between; height: 14px; margin-bottom: 5px; font-size: 10px; line-height: 14px; }
.help { width: 12px; height: 12px; color: #a4a5ab; }
.field { display: block; width: 100%; height: 30px; padding: 0 9px 2px; border-radius: 6px; background: #21222a; }
.sidebar .field, .dark { background: #0f1014; }
.stepper { display: flex; align-items: center; height: 30px; padding: 0 1px 0 9px; border-radius: 6px; background: #21222a; }
.stepper.dark { background: #0f1014; }
.stepper input { flex: 1; min-width: 0; width: 0; height: 30px; padding-bottom: 1px; }
.stepper button { width: 24px; height: 30px; display: grid; place-items: center; }
.stepper svg { width: 10px; height: 10px; }
details { margin-top: 12px; border: 1px solid #393a43; border-radius: 6px; }
summary { display: flex; align-items: center; height: 28px; padding: 0 10px 1px; list-style: none; }
summary::-webkit-details-marker { display: none; }
.chev { width: 10px; height: 10px; margin-right: 10px; }
summary svg + svg { margin-right: 1px; }
.select { position: relative; }
.select select { display: block; width: 100%; height: 30px; padding: 0 9px 2px; border-radius: 6px; background: #0f1014; appearance: none; }
.select svg { position: absolute; right: 10px; top: 10px; pointer-events: none; }
.range-label { margin: 14px 0 0; }
output { display: block; padding-left: 6px; font-weight: 400; font-size: 10px; line-height: 14px; color: #e5484d; }
.range { display: block; appearance: none; width: 100%; height: 10px; background: linear-gradient(90deg, #ff4b4b 7%, #393a42 7%) center / 100% 3px no-repeat; }
.range::-webkit-slider-thumb { appearance: none; width: 10px; height: 10px; border-radius: 50%; background: #ff4b4b; }
.check { display: flex; align-items: center; margin-top: 22px; }
.check input { appearance: none; width: 12px; height: 12px; margin-right: 8px; border: 1px solid #5c5d66; border-radius: 3px; }
.check .help { margin-left: 5px; }

main { flex: 1; min-width: 0; }
.apphead { height: 46px; display: flex; align-items: center; justify-content: flex-end; gap: 17px; padding-right: 22px; }
.apphead button:first-child { font-size: 9px; }
.content { padding: 37px 59px 0; }
h1 { display: flex; align-items: center; gap: 6px; font-size: 29px; line-height: 44px; font-weight: 700; white-space: nowrap; }
.lead { margin: 9px 0 20px; }
.columns { display: grid; grid-template-columns: 1fr 1fr; gap: 12px; }
.columns section { min-width: 0; }
.columns h2 { display: flex; align-items: center; gap: 3px; height: 28px; font-size: 19px; line-height: 28px; font-weight: 700; }
.add { margin-top: 12px; border-color: #27282b; }
.add summary { padding: 0 11px 1px; }
.stops { display: grid; gap: 12px; margin-top: 12px; }
.stop { display: grid; grid-template-columns: 311fr 98fr 45fr; gap: 12px; }
.remove { width: 31px; height: 30px; display: grid; place-items: center; border: 1px solid #2b2d31; border-radius: 6px; background: #11141a; }
.remove svg { width: 14px; height: 14px; }
.columns hr { margin: 33px 0 24px; background: #292a2e; }
.run { position: relative; width: 100%; height: 30px; padding-bottom: 2px; display: flex; align-items: center; justify-content: center; gap: 2px; border-radius: 6px; background: #ff0000; color: #fff; }
.cursor { position: absolute; left: 48%; top: 8px; }
.error { margin-top: 12px; padding: 11px 9px 13px 12px; border-radius: 6px; background: #382024; color: #e85d60; font-weight: 400; }
.info { margin-top: 18px; padding: 11px 12px 13px; border-radius: 6px; background: #172638; color: #3f8fe0; font-weight: 400; }
.content > hr { margin: 36px 0 21px; background: #292a2e; }
footer { font-size: 9px; line-height: 20px; color: #9b9ca0; font-weight: 400; }

.map { position: relative; overflow: hidden; aspect-ratio: 478 / 371; margin-top: 12px; }
.mapart { width: 100%; height: 100%; font-family: "Noto Sans CJK KR", sans-serif; font-weight: 400; text-anchor: middle; }
.route { font: italic 500 21px "Noto Sans", sans-serif; fill: #b8304f; stroke: #f1e4df; stroke-width: 2px; paint-order: stroke; }
.place { font-size: 32px; fill: #222; stroke: #f4f2ee; stroke-width: 4px; paint-order: stroke; }
.place .city { font-size: 34px; }
.town { font-size: 23px; fill: #444; stroke: #f4f2ee; stroke-width: 3px; paint-order: stroke; }
.air { font-size: 23px; fill: #6f5db4; stroke: #f4f2ee; stroke-width: 3px; paint-order: stroke; }
.district { font-size: 19px; fill: #a57d96; }
.zoom { position: absolute; left: 8px; top: 8px; display: grid; border: 1px solid #b5b5b0; border-radius: 3px; background: #fff; }
.zoom button { width: 22px; height: 22px; color: #000; font: 700 16px/20px "Liberation Sans", sans-serif; }
.zoom button + button { border-top: 1px solid #ccc; }
.credit { position: absolute; right: 0; bottom: 0; width: 40%; padding: 0 4px; overflow: hidden; white-space: nowrap; background: #ffffffcc; color: #333; font: 400 12px/17px "Liberation Sans", sans-serif; }
.credit svg { display: inline-block; }
.credit a { color: #0078a8; }
```
